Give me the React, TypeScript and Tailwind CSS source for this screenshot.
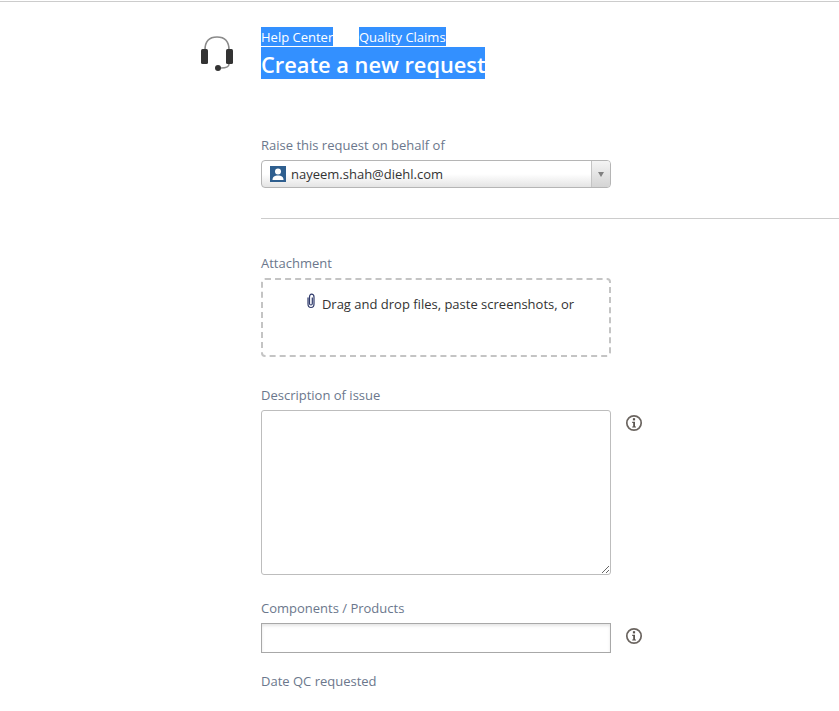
const font = { fontFamily: '"Open Sans", "Noto Sans", sans-serif' };

function Headset() {
  return (
    <svg width="34" height="36" viewBox="0 0 34 36" fill="none">
      <path d="M5 15 C5 6 10 2 17 2 C24 2 29 6 29 15" stroke="#8a8a8a" strokeWidth="1.6" />
      <rect x="1" y="14" width="7" height="15" rx="1.5" fill="#333333" />
      <rect x="26" y="14" width="7" height="15" rx="1.5" fill="#333333" />
      <path d="M29 29 C29 32 26 33 21 33" stroke="#8a8a8a" strokeWidth="1.5" />
      <circle cx="18" cy="33" r="3" fill="#333333" />
    </svg>
  );
}

function InfoIcon() {
  return (
    <svg width="18" height="18" viewBox="0 0 18 18" fill="none">
      <circle cx="9" cy="9" r="7.2" stroke="#6b6560" strokeWidth="1.7" />
      <rect x="7.9" y="4.2" width="2.2" height="2.2" fill="#5a5550" />
      <path d="M7.2 7.7 H10 V12.4 H11 V13.6 H7.2 V12.4 H8.2 V8.9 H7.2 Z" fill="#5a5550" />
    </svg>
  );
}

function Label({ children }: { children: string }) {
  return <div className="text-[13px] leading-[18px] text-[#6b778c]">{children}</div>;
}

export default function App() {
  return (
    <div className="h-[711px] overflow-hidden bg-white pt-px text-[#333333]" style={font}>
      <div className="border-t border-[#cccccc] flex pl-[200px]">
        <div className="w-[61px] pt-[33px] shrink-0">
          <Headset />
        </div>
        <div className="flex-1 pt-[25px]">
          <div className="flex gap-[26px] text-[13px] leading-[21px] h-[19px] text-white">
            <span className="bg-[#3390ff] w-[72px] h-[19px] whitespace-nowrap">Help Center</span>
            <span className="bg-[#3390ff] w-[87px] h-[19px] whitespace-nowrap">Quality Claims</span>
          </div>
          <h1 className="mt-px w-[224px] h-[32px] bg-[#3390ff] text-white text-[21.8px] leading-[36px] font-semibold whitespace-nowrap">
            Create a new request
          </h1>

          <div className="mt-[57px]">
            <Label>Raise this request on behalf of</Label>
          </div>
          <div className="mt-[6px] w-[350px] h-[28px] flex rounded-[4px] border border-[#b5b5b5] bg-gradient-to-b from-white via-white to-[#e4e4e4] overflow-hidden">
            <div className="flex-1 flex items-center pl-2 gap-[5px]">
              <svg width="16" height="16" viewBox="0 0 16 16">
                <rect width="16" height="16" fill="#2f5f8f" />
                <circle cx="8" cy="5.5" r="3" fill="#ffffff" />
                <path d="M2.5 14 C2.5 10.5 5 9.5 8 9.5 C11 9.5 13.5 10.5 13.5 14 Z" fill="#ffffff" />
              </svg>
              <span className="text-[13px] leading-[20px] text-[#333333]">nayeem.shah@diehl.com</span>
            </div>
            <div className="w-[19px] border-l border-[#c4c4c4] bg-gradient-to-b from-[#f4f4f4] to-[#d4d4d4] flex items-center justify-center">
              <div className="w-0 h-0 border-l-[3px] border-r-[3px] border-t-[5px] border-l-transparent border-r-transparent border-t-[#808080]" />
            </div>
          </div>

          <div className="mt-[30px] h-px bg-[#cccccc]" />

          <div className="mt-[35px]">
            <Label>Attachment</Label>
          </div>
          <div className="mt-[6px] w-[350px] h-[79px] rounded-[4px] border-2 border-dashed border-[#c4c4c4] flex justify-center pt-[15px] pl-[7px]">
            <div className="flex items-start gap-[5px] text-[13px] leading-[18px] text-[#333333]">
              <svg width="12" height="16" viewBox="0 0 12 16" fill="none" className="-mt-[2px]">
                <path
                  d="M3 4.5 V11 C3 13 4.2 14.5 6 14.5 C7.8 14.5 9 13 9 11 V4 C9 2.4 8 1.2 6.6 1.2 C5.2 1.2 4.5 2.4 4.5 4 V10.5 C4.5 11.5 5 12 6 12 C7 12 7.3 11.5 7.3 10.5 V4.5"
                  stroke="#2f3a6b"
                  strokeWidth="1.2"
                />
              </svg>
              <span>Drag and drop files, paste screenshots, or</span>
            </div>
          </div>

          <div className="mt-[29px]">
            <Label>Description of issue</Label>
          </div>
          <div className="mt-[6px] flex items-start gap-[14px]">
            <textarea
              readOnly
              className="block w-[350px] h-[165px] rounded-[3px] border border-[#bdbdbd] bg-white outline-none"
            />
            <div className="mt-[4px]">
              <InfoIcon />
            </div>
          </div>

          <div className="mt-[24px]">
            <Label>Components / Products</Label>
          </div>
          <div className="mt-[6px] flex items-start gap-[14px]">
            <input
              readOnly
              className="block w-[350px] h-[30px] border border-[#a8a8a8] shadow-[inset_0_2px_3px_rgba(0,0,0,0.1)] bg-white outline-none"
            />
            <div className="mt-[4px]">
              <InfoIcon />
            </div>
          </div>

          <div className="mt-[19px]">
            <Label>Date QC requested</Label>
          </div>
        </div>
      </div>
    </div>
  );
}
